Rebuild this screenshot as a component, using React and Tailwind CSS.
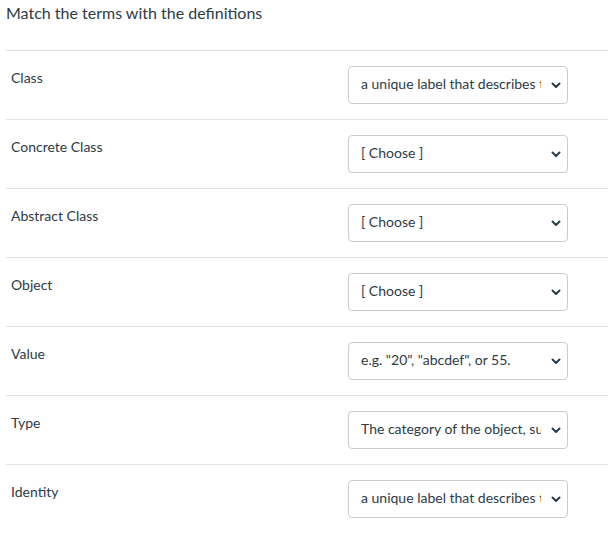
import React from 'react';

const rows = [
    { term: 'Class', value: 'a unique label that describes the object' },
    { term: 'Concrete Class', value: '[ Choose ]' },
    { term: 'Abstract Class', value: '[ Choose ]' },
    { term: 'Object', value: '[ Choose ]' },
    { term: 'Value', value: 'e.g. "20", "abcdef", or 55.' },
    { term: 'Type', value: 'The category of the object, such as string or integer' },
    { term: 'Identity', value: 'a unique label that describes the object' },
];

const Chevron = () => (
    <svg width="10" height="7" viewBox="0 0 10 7" className="shrink-0">
        <path d="M1.5 1.5L5 5L8.5 1.5" stroke="#2d3b45" strokeWidth="2" fill="none" strokeLinecap="round" strokeLinejoin="round" />
    </svg>
);

const FakeSelect = ({ value }) => (
    <div className="w-[220px] h-[38px] mr-[40px] shrink-0 flex items-center bg-white border border-[#c7cdd1] rounded-[4px] pl-[12px] pr-[6px]">
        <div className="flex-1 overflow-hidden whitespace-nowrap text-[14px] leading-5 text-[#2d3b45] pr-[10px] pb-[2px]">
            <span className="block overflow-hidden">{value}</span>
        </div>
        <Chevron />
    </div>
);

export default function App() {
    return (
        <div className="bg-white min-h-[539px] pl-[6px] font-['Lato','Liberation_Sans',sans-serif] text-[#2d3b45]">
            <div className="h-[50px] pt-[1px] text-[16px] leading-6">Match the terms with the definitions</div>
            {rows.map((row) => (
                <div key={row.term} className="flex border-t border-[#dfe3e5] pt-[15px] pb-[15px]">
                    <div className="flex-1 pl-[5px] pt-[2px] text-[14px] leading-5">{row.term}</div>
                    <FakeSelect value={row.value} />
                </div>
            ))}
        </div>
    );
}
